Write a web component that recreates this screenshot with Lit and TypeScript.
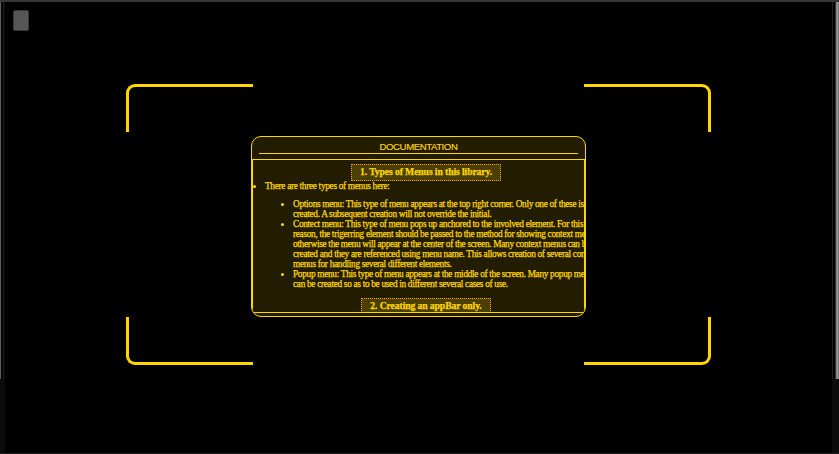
import { LitElement, html, css } from "lit";
import { customElement } from "lit/decorators.js";

const items: string[][] = [
  [
    "Options menu: This type of menu appears at the top right corner. Only one of these is",
    "created. A subsequent creation will not override the initial.",
  ],
  [
    "Contect menu: This type of menu pops up anchored to the involved element. For this",
    "reason, the trigerring element should be passed to the method for showing context me",
    "otherwise the menu will appear at the center of the screen. Many context menus can b",
    "created and they are referenced using menu name. This allows creation of several con",
    "menus for handling several different elements.",
  ],
  [
    "Popup menu: This type of menu appears at the middle of the screen. Many popup me",
    "can be created so as to be used in different several cases of use.",
  ],
];

@customElement("doc-card")
export class DocCard extends LitElement {
  static styles = css`
    :host {
      display: flex;
      flex-direction: column;
      box-sizing: border-box;
      width: 335px;
      height: 181px;
      border: 1px solid #ffd700;
      border-radius: 10px;
      background: #221d00;
      color: #ffd700;
      overflow: hidden;
    }
    header {
      height: 16px;
      margin: 0 7px 5px;
      border-bottom: 1px solid #ffd700;
      font: 9.6px/19px "Liberation Sans", Arial, sans-serif;
      letter-spacing: -0.42px;
      -webkit-text-stroke: 0.15px #ffd700;
      text-align: center;
    }
    .body {
      box-sizing: border-box;
      height: 154px;
      border: 1px solid #ffd700;
      overflow: hidden;
      font: 9.3px/10px "Liberation Serif", "Times New Roman", serif;
      letter-spacing: -0.31px;
      -webkit-text-stroke: 0.25px #ffd700;
      white-space: nowrap;
      padding-top: 4px;
    }
    h3 {
      box-sizing: border-box;
      height: 17px;
      width: 150px;
      margin: 0 0 0 98px;
      border: 1px dotted #ffa500;
      background: #4a3f00;
      font: bold 9.7px/14px "Liberation Serif", "Times New Roman", serif;
      letter-spacing: -0.11px;
      text-align: center;
    }
    h3.second {
      width: 130px;
      margin: 9px 0 0 108px;
    }
    ul {
      margin: 0;
      padding: 0;
      list-style: none;
    }
    li {
      display: flex;
    }
    li::before {
      content: "";
      flex: none;
      width: 3px;
      height: 3px;
      margin: 4px 9px 0 0;
      border-radius: 50%;
      background: #ffd700;
    }
    .lead {
      margin-bottom: 8px;
    }
    .inner {
      padding-left: 28px;
    }
  `;

  render() {
    return html`
      <header>DOCUMENTATION</header>
      <div class="body">
        <h3>1. Types of Menus in this library.</h3>
        <ul class="lead"><li>There are three types of menus here:</li></ul>
        <ul class="inner">
          ${items.map((lines) => html`<li><div>${lines.map((l) => html`<div>${l}</div>`)}</div></li>`)}
        </ul>
        <h3 class="second">2. Creating an appBar only.</h3>
      </div>
    `;
  }
}

@customElement("app-root")
export class AppRoot extends LitElement {
  static styles = css`
    :host {
      display: grid;
      grid-template-columns: 5px 1fr 7px;
      grid-template-rows: 2px 1fr 1px;
      width: 839px;
      height: 454px;
      background: #000;
      overflow: hidden;
    }
    .top {
      grid-column: 1 / -1;
      background: #373737;
    }
    .bottom {
      grid-column: 1 / -1;
      background: #1c1c1c;
    }
    .rail {
      display: flex;
      flex-direction: column;
      background: #0b0b0b;
    }
    .rail div {
      height: 377px;
    }
    .left div {
      background: linear-gradient(to right, #5c5c5c 1px, #050505 1px 3px, #191919 3px 4px, #0a0a0a 4px);
    }
    .right div {
      background: linear-gradient(to right, #202020 1px, #000 1px 3px, #333 3px 4px, #808080 4px 5px, #999 5px 6px, #777 6px);
    }
    .stage {
      display: grid;
      grid-template-rows: 82px 281px;
      grid-template-columns: 121px 585px;
    }
    .chip {
      grid-column: 1 / -1;
      box-sizing: border-box;
      width: 16px;
      height: 21px;
      margin: 8px 0 0 8px;
      border: 1px solid #383838;
      border-radius: 2px;
      background: #565656;
    }
    .frame {
      grid-column: 2;
      display: grid;
      grid-template: 48px 185px 48px / 127px 331px 127px;
    }
    .corner {
      box-sizing: border-box;
      border: 0 solid #ffd700;
    }
    .tl {
      grid-area: 1 / 1;
      border-width: 3px 0 0 3px;
      border-top-left-radius: 9px;
    }
    .tr {
      grid-area: 1 / 3;
      border-width: 3px 3px 0 0;
      border-top-right-radius: 9px;
    }
    .bl {
      grid-area: 3 / 1;
      border-width: 0 0 3px 3px;
      border-bottom-left-radius: 9px;
    }
    .br {
      grid-area: 3 / 3;
      border-width: 0 3px 3px 0;
      border-bottom-right-radius: 9px;
    }
    doc-card {
      grid-area: 1 / 1 / 4 / 4;
      margin: 52px 0 0 125px;
    }
  `;

  render() {
    return html`
      <div class="top"></div>
      <div class="rail left"><div></div></div>
      <div class="stage">
        <div class="chip"></div>
        <div class="frame">
          <div class="corner tl"></div>
          <div class="corner tr"></div>
          <div class="corner bl"></div>
          <div class="corner br"></div>
          <doc-card></doc-card>
        </div>
      </div>
      <div class="rail right"><div></div></div>
      <div class="bottom"></div>
    `;
  }
}
